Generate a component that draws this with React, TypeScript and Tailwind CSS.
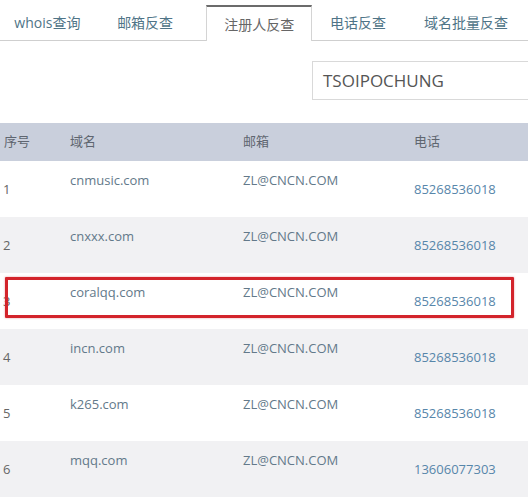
import React from 'react';

const tabs = [
  { label: 'whois查询', w: 'w-[96px]' },
  { label: '邮箱反查', w: 'w-[102px]' },
];
const tabsRight = [
  { label: '电话反查', w: 'w-[92px]' },
  { label: '域名批量反查', w: 'w-[124px]' },
];

const rows = [
  { n: '1', domain: 'cnmusic.com', phone: '85268536018' },
  { n: '2', domain: 'cnxxx.com', phone: '85268536018' },
  { n: '3', domain: 'coralqq.com', phone: '85268536018', marked: true },
  { n: '4', domain: 'incn.com', phone: '85268536018' },
  { n: '5', domain: 'k265.com', phone: '85268536018' },
  { n: '6', domain: 'mqq.com', phone: '13606077303' },
];

export default function App() {
  return (
    <div
      className="w-[528px] h-[504px] overflow-hidden bg-white"
      style={{ fontFamily: '"Open Sans", "Noto Sans CJK SC", sans-serif' }}
    >
      {/* tab strip */}
      <div className="flex h-[41px] items-end">
        {tabs.map((t) => (
          <div key={t.label} className={`${t.w} h-[36px] border-b border-[#cfcfcf] flex items-center justify-center text-[14px] text-[#4f7487]`}>
            {t.label}
          </div>
        ))}
        <div className="w-[11px] h-[36px] border-b border-[#cfcfcf]" />
        <div className="w-[107px] h-[36px] border-t-2 border-x border-t-[#6b6b6b] border-x-[#d4d4d4] bg-white flex items-center justify-center text-[14px] text-[#666]">
          注册人反查
        </div>
        {tabsRight.map((t) => (
          <div key={t.label} className={`${t.w} h-[36px] shrink-0 border-b border-[#cfcfcf] flex items-center justify-center text-[14px] text-[#4f7487]`}>
            {t.label}
          </div>
        ))}
      </div>

      {/* search */}
      <div className="flex mt-[20px] pl-[312px]">
        <div className="w-[230px] shrink-0 h-[39px] border border-[#d9d9d9] flex items-center pl-[10px] text-[17px] text-[#555]">
          TSOIPOCHUNG
        </div>
      </div>

      {/* table */}
      <div className="mt-[23px] text-[13px]">
        <div className="grid grid-cols-[66px_173px_171px_1fr] h-[38px] items-center bg-[#c9cfdc] text-[#5f6670]">
          <div className="pl-[4px]">序号</div>
          <div className="pl-[4px]">域名</div>
          <div className="pl-[4px]">邮箱</div>
          <div className="pl-[4px]">电话</div>
        </div>
        {rows.map((r, i) => (
          <div
            key={r.n}
            className={`relative grid grid-cols-[66px_173px_171px_1fr] h-[56px] ${i % 2 ? 'bg-[#f1f1f3]' : 'bg-white'}`}
          >
            <div className="pl-[3px] self-center pt-[2px] text-[#666]">{r.n}</div>
            <div className="pl-[4px] pt-[10px] leading-[18px] text-[#63798a]">{r.domain}</div>
            <div className="pl-[4px] pt-[10px] leading-[18px] text-[#63798a]">ZL@CNCN.COM</div>
            <div className="pl-[4px] self-center pt-[2px] text-[#5786aa]">{r.phone}</div>
            {r.marked && (
              <div className="absolute left-[5px] top-[4px] w-[509px] h-[41px] border-[3px] border-[#d3242b] rounded-[1px] shadow-[0_0_2px_rgba(210,30,40,0.5)]" />
            )}
          </div>
        ))}
      </div>
    </div>
  );
}
